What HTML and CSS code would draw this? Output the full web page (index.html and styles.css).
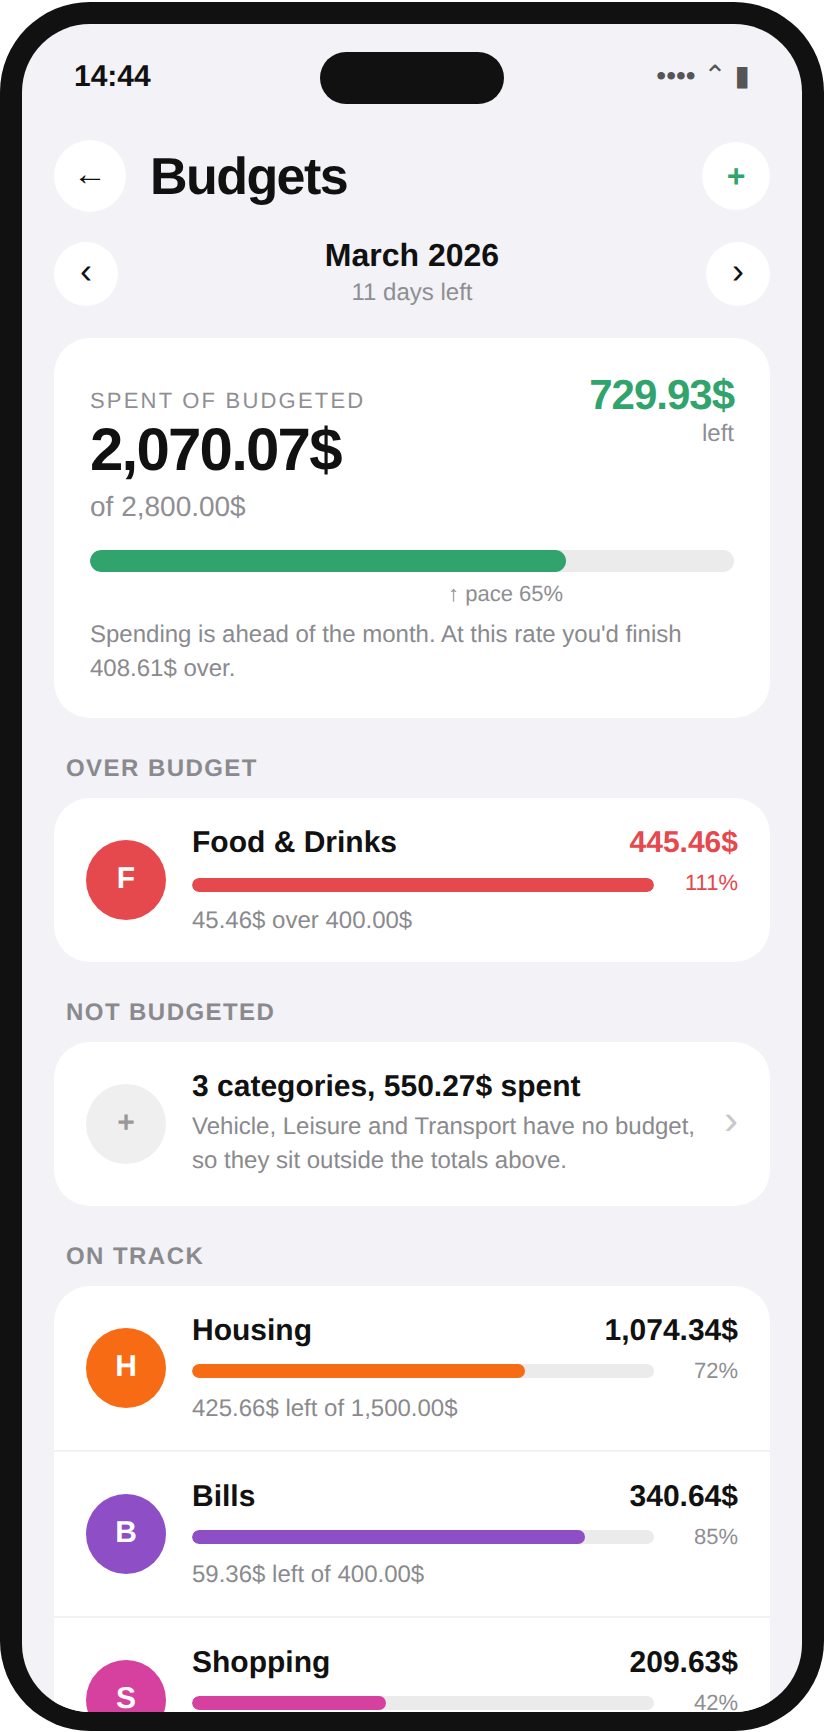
FILE: index.html
```html
<!DOCTYPE html>
<html lang="en">
<head>
    <meta charset="UTF-8">
    <title>Budgets</title>
    <link rel="stylesheet" href="styles.css">
</head>
<body>
    <div class="phone">
        <div class="screen">
            <div class="island"></div>

            <div class="status">
                <span class="time">14:44</span>
                <span class="status-icons">•••• ⌃ ▮</span>
            </div>

            <header class="top">
                <button class="circle back">←</button>
                <h1>Budgets</h1>
                <button class="circle add">+</button>
            </header>

            <nav class="month">
                <button class="circle small">‹</button>
                <div class="month-text">
                    <div class="month-name">March 2026</div>
                    <div class="month-left">11 days left</div>
                </div>
                <button class="circle small">›</button>
            </nav>

            <section class="card summary">
                <div class="summary-top">
                    <div>
                        <div class="summary-label">SPENT OF BUDGETED</div>
                        <div class="summary-amount">2,070.07$</div>
                        <div class="summary-of">of 2,800.00$</div>
                    </div>
                    <div class="summary-right">
                        <div class="summary-left">729.93$</div>
                        <div class="summary-left-label">left</div>
                    </div>
                </div>
                <div class="track big"><div class="fill green" style="width: 73.93%"></div></div>
                <div class="pace">↑ pace 65%</div>
                <p class="summary-note">Spending is ahead of the month. At this rate you'd finish 408.61$ over.</p>
            </section>

            <h2>OVER BUDGET</h2>
            <section class="card">
                <div class="row over">
                    <div class="avatar red">F</div>
                    <div class="row-body">
                        <div class="row-line">
                            <span class="row-name">Food &amp; Drinks</span>
                            <span class="row-amount text-red">445.46$</span>
                        </div>
                        <div class="row-bar">
                            <div class="track"><div class="fill red" style="width: 100%"></div></div>
                            <span class="row-pct text-red">111%</span>
                        </div>
                        <div class="row-sub">45.46$ over 400.00$</div>
                    </div>
                </div>
            </section>

            <h2>NOT BUDGETED</h2>
            <section class="card">
                <div class="row">
                    <div class="avatar empty">+</div>
                    <div class="row-body row-body-text">
                        <div class="row-name">3 categories, 550.27$ spent</div>
                        <div class="row-desc">Vehicle, Leisure and Transport have no budget, so they sit outside the totals above.</div>
                    </div>
                    <span class="chevron">›</span>
                </div>
            </section>

            <h2>ON TRACK</h2>
            <section class="card">
                <div class="row">
                    <div class="avatar orange">H</div>
                    <div class="row-body">
                        <div class="row-line">
                            <span class="row-name">Housing</span>
                            <span class="row-amount">1,074.34$</span>
                        </div>
                        <div class="row-bar">
                            <div class="track"><div class="fill orange" style="width: 72%"></div></div>
                            <span class="row-pct">72%</span>
                        </div>
                        <div class="row-sub">425.66$ left of 1,500.00$</div>
                    </div>
                </div>
                <div class="row">
                    <div class="avatar purple">B</div>
                    <div class="row-body">
                        <div class="row-line">
                            <span class="row-name">Bills</span>
                            <span class="row-amount">340.64$</span>
                        </div>
                        <div class="row-bar">
                            <div class="track"><div class="fill purple" style="width: 85%"></div></div>
                            <span class="row-pct">85%</span>
                        </div>
                        <div class="row-sub">59.36$ left of 400.00$</div>
                    </div>
                </div>
                <div class="row">
                    <div class="avatar pink">S</div>
                    <div class="row-body">
                        <div class="row-line">
                            <span class="row-name">Shopping</span>
                            <span class="row-amount">209.63$</span>
                        </div>
                        <div class="row-bar">
                            <div class="track"><div class="fill pink" style="width: 42%"></div></div>
                            <span class="row-pct">42%</span>
                        </div>
                        <div class="row-sub">290.37$ left of 500.00$</div>
                    </div>
                </div>
            </section>
        </div>
    </div>
</body>
</html>
```

FILE: styles.css
```css
* {
    margin: 0;
    padding: 0;
    box-sizing: border-box;
    font-family: 'Liberation Sans', Arial, sans-serif;
    text-rendering: geometricPrecision;
}

body {
    background: #fff;
    padding: 2px 0;
    overflow: hidden;
}

.phone {
    width: 824px;
    height: 1729px;
    background: #111;
    border-radius: 90px;
    padding: 22px;
}

.screen {
    position: relative;
    height: 1688px;
    background: #f2f2f7;
    border-radius: 68px;
    overflow: hidden;
    padding: 0 32px;
}

.island {
    position: absolute;
    top: 28px;
    left: 298px;
    width: 184px;
    height: 52px;
    background: #111;
    border-radius: 26px;
}

.status {
    display: flex;
    justify-content: space-between;
    align-items: center;
    height: 52px;
    margin: 28px 0 36px;
    padding: 0 20px;
}

.time {
    font-size: 30px;
    font-weight: 700;
    color: #111;
    margin-bottom: 2px;
}

.status-icons {
    font-size: 28px;
    color: #555;
    padding-bottom: 6px;
}

.top {
    display: flex;
    align-items: center;
    height: 72px;
}

h1 {
    flex: 1;
    font-size: 52px;
    font-weight: 700;
    letter-spacing: -1.56px;
    color: #111;
    margin-left: 24px;
    padding-top: 2px;
}

.circle {
    flex: none;
    display: flex;
    align-items: center;
    justify-content: center;
    background: #fff;
    border: none;
    border-radius: 50%;
    color: #111;
}

.back {
    width: 72px;
    height: 72px;
    font-size: 34px;
    padding-bottom: 4px;
}

.add {
    width: 68px;
    height: 68px;
    font-size: 32px;
    font-weight: 700;
    color: #30a46c;
}

.small {
    width: 64px;
    height: 64px;
    font-size: 36px;
    padding-bottom: 6px;
}

.month {
    display: flex;
    align-items: center;
    justify-content: space-between;
    height: 64px;
    margin-top: 30px;
}

.month-text {
    text-align: center;
    margin-bottom: 5px;
}

.month-name {
    font-size: 32px;
    font-weight: 700;
    color: #111;
}

.month-left {
    font-size: 24px;
    color: #8e8e93;
    margin-top: 5px;
}

.card {
    background: #fff;
    border-radius: 36px;
    overflow: hidden;
}

.summary {
    margin-top: 32px;
    padding: 36px;
    height: 380px;
}

.summary-top {
    display: flex;
    justify-content: space-between;
}

.summary-label {
    font-size: 22px;
    letter-spacing: 2.2px;
    color: #8e8e93;
    margin: 14px 0 2px;
}

.summary-amount {
    font-size: 60px;
    font-weight: 700;
    letter-spacing: -1.8px;
    color: #111;
    line-height: 68px;
}

.summary-of {
    font-size: 28px;
    color: #8e8e93;
    margin-top: 7px;
}

.summary-right {
    text-align: right;
    margin-top: -3px;
}

.summary-left {
    font-size: 42px;
    font-weight: 700;
    letter-spacing: -1px;
    color: #30a46c;
}

.summary-left-label {
    font-size: 24px;
    color: #8e8e93;
    margin-top: 1px;
}

.track {
    flex: 1;
    height: 14px;
    background: #ebebeb;
    border-radius: 7px;
    overflow: hidden;
}

.track.big {
    height: 22px;
    border-radius: 11px;
    margin-top: 27px;
}

.fill {
    height: 100%;
    border-radius: 11px;
}

.pace {
    width: fit-content;
    margin-left: 65%;
    transform: translateX(calc(-50% - 3px));
    font-size: 22px;
    color: #8e8e93;
    margin-top: 9px;
}

.summary-note {
    font-size: 24px;
    line-height: 34px;
    color: #8a8a8e;
    margin-top: 11px;
}

h2 {
    font-size: 24px;
    font-weight: 700;
    letter-spacing: 1.44px;
    color: #8a8a8e;
    padding-left: 12px;
    margin: 37px 0 15px;
}

.row {
    display: flex;
    align-items: center;
    height: 164px;
    padding: 0 32px;
    gap: 26px;
}

.row + .row {
    height: 166px;
    border-top: 2px solid #f2f2f2;
}

.avatar {
    flex: none;
    width: 80px;
    height: 80px;
    display: flex;
    align-items: center;
    justify-content: center;
    border-radius: 50%;
    font-size: 30px;
    font-weight: 700;
    color: #fff;
    padding-bottom: 2px;
}

.avatar.empty {
    background: #efefef;
    color: #999;
}

.red { background: #e5484d; }
.orange { background: #f76b15; }
.purple { background: #8e4ec6; }
.pink { background: #d6409f; }
.green { background: #30a46c; }
.text-red { color: #e5484d !important; }

.row-body {
    flex: 1;
    min-width: 0;
    padding-top: 1px;
}

.row-body-text {
    padding-top: 0;
}

.row-line {
    display: flex;
    justify-content: space-between;
    line-height: 34px;
}

.row-name,
.row-amount {
    font-size: 30px;
    font-weight: 700;
    color: #111;
}

.row-bar {
    display: flex;
    align-items: center;
    gap: 30px;
    height: 26px;
    margin-top: 10px;
}

.over .track {
    margin-top: 4px;
}

.row-pct {
    width: 54px;
    text-align: right;
    font-size: 22px;
    color: #8e8e93;
}

.row-sub {
    font-size: 24px;
    line-height: 28px;
    color: #8a8a8e;
    margin-top: 11px;
}

.row-desc {
    font-size: 24px;
    line-height: 34px;
    color: #8a8a8e;
    margin-top: 6px;
}

.chevron {
    font-size: 42px;
    color: #c7c7cc;
    padding-bottom: 8px;
}
```
